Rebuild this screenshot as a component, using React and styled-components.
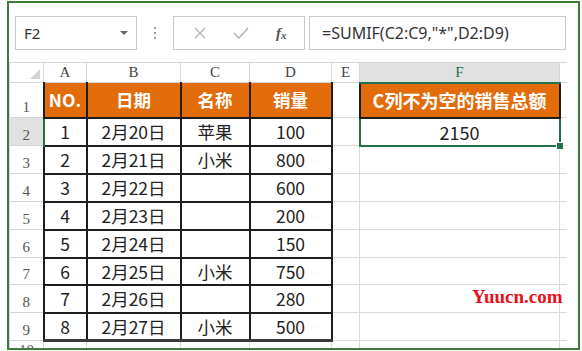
import React from 'react';
import styled, { createGlobalStyle } from 'styled-components';

const GlobalStyle = createGlobalStyle`
  html, body { margin: 0; padding: 0; background: #fff; }
  body { font-family: "Noto Sans", "Noto Sans CJK SC", sans-serif; }
`;

const Frame = styled.div`
  position: relative;
  box-sizing: border-box;
  width: 573px;
  height: 349px;
  margin: 1px 0 0 7px;
  border: 2px solid #3c7d3c;
  overflow: hidden;
  background: #fff;
`;

const FormulaBar = styled.div`
  display: flex;
  align-items: stretch;
  height: 34px;
  padding: 13px 0 0 6px;
`;

const NameBox = styled.div`
  box-sizing: border-box;
  width: 122px;
  display: flex;
  align-items: center;
  justify-content: space-between;
  padding: 0 8px 0 8px;
  border: 1px solid #c8c8c8;
  font-size: 15px;
  color: #333;
`;

const Caret = styled.span`
  width: 0;
  height: 0;
  border-left: 4px solid transparent;
  border-right: 4px solid transparent;
  border-top: 4px solid #666;
`;

const Dots = styled.div`
  width: 36px;
  display: flex;
  flex-direction: column;
  align-items: center;
  justify-content: center;
  gap: 3px;
  span {
    width: 2px;
    height: 2px;
    background: #999;
  }
`;

const FxBox = styled.div`
  box-sizing: border-box;
  width: 132px;
  display: flex;
  align-items: center;
  justify-content: space-around;
  padding: 0 4px 0 6px;
  border: 1px solid #c8c8c8;
`;

const Fx = styled.span`
  font-family: "Liberation Serif", serif;
  font-style: italic;
  font-weight: bold;
  font-size: 15px;
  color: #555;
  sub {
    font-size: 11px;
    vertical-align: -1px;
  }
`;

const FormulaInput = styled.div`
  box-sizing: border-box;
  width: 257px;
  margin-left: 4px;
  display: flex;
  align-items: center;
  padding-left: 12px;
  border: 1px solid #c8c8c8;
  font-size: 16px;
  color: #333;
`;

const Sheet = styled.table`
  margin-top: 12px;
  border-collapse: collapse;
  table-layout: fixed;
  width: 557px;
`;

const Row = styled.tr`
  height: ${p => p.$h}px;
`;

const ColHead = styled.th`
  padding: 0;
  font-family: "Liberation Serif", "DejaVu Serif", serif;
  font-weight: normal;
  font-size: 15px;
  color: ${p => (p.$sel ? '#217346' : '#444')};
  background: ${p => (p.$sel ? '#e1e1e1' : '#fff')};
  border: 1px solid #d6d6d6;
  border-bottom: ${p => (p.$sel ? '2px solid #217346' : '1px solid #d6d6d6')};
  ${p => p.$last && 'border-right: 0;'}
`;

const Corner = styled.th`
  position: relative;
  padding: 0;
  border: 1px solid #d6d6d6;
  &::after {
    content: '';
    position: absolute;
    right: 3px;
    bottom: 3px;
    width: 0;
    height: 0;
    border-left: 10px solid transparent;
    border-bottom: 10px solid #d3d3d3;
  }
`;

const RowHead = styled.th`
  padding: 0 0 1px;
  vertical-align: bottom;
  font-family: "Liberation Serif", "DejaVu Serif", serif;
  font-weight: normal;
  font-size: 15px;
  color: #555;
  background: ${p => (p.$sel ? '#e1e1e1' : '#fff')};
  border: 1px solid #d6d6d6;
  border-right: ${p => (p.$sel ? '2px solid #217346' : '1px solid #d6d6d6')};
`;

const Cell = styled.td`
  position: relative;
  padding: 0;
  text-align: center;
  vertical-align: middle;
  white-space: nowrap;
  overflow: visible;
  font-family: "Noto Sans CJK SC", sans-serif;
  font-size: 17.5px;
  color: #222;
  border: 1px solid #dadada;
  ${p => p.$grid === false && 'border-right: 0;'}
  ${p => p.$table && 'border: 2px solid #1e1e1e;'}
  ${p => p.$head && `
    background: #e26b0a;
    color: #fff;
    font-weight: bold;
    border-top: 1px solid #d6d6d6;
  `}
  ${p => p.$bottom && 'border-bottom: 3px solid #3a3a3a;'}
  ${p => p.$active && 'border: 2px solid #217346;'}
  ${p => p.$wide && 'font-size: 18px;'}
`;

const FillHandle = styled.span`
  position: absolute;
  right: -5px;
  bottom: -5px;
  width: 6px;
  height: 6px;
  background: #217346;
  border: 1px solid #fff;
`;

const Watermark = styled.span`
  position: absolute;
  left: 463px;
  top: 284px;
  font-family: "Liberation Serif", serif;
  font-weight: bold;
  font-size: 19px;
  line-height: 1;
  color: #e8101a;
`;

const rows = [
  [1, '2月20日', '苹果', 100],
  [2, '2月21日', '小米', 800],
  [3, '2月22日', '', 600],
  [4, '2月23日', '', 200],
  [5, '2月24日', '', 150],
  [6, '2月25日', '小米', 750],
  [7, '2月26日', '', 280],
  [8, '2月27日', '小米', 500],
];
const heights = [27, 28, 28, 28, 28, 27, 28, 27];
const cols = ['A', 'B', 'C', 'D', 'E', 'F'];

export default function App() {
  return (
    <>
      <GlobalStyle />
      <Frame>
        <FormulaBar>
          <NameBox>
            F2
            <Caret />
          </NameBox>
          <Dots>
            <span />
            <span />
            <span />
          </Dots>
          <FxBox>
            <svg width="12" height="12" viewBox="0 0 12 12">
              <path d="M1 1 L11 11 M11 1 L1 11" stroke="#b4b4b4" strokeWidth="1.4" fill="none" />
            </svg>
            <svg width="16" height="12" viewBox="0 0 16 12">
              <path d="M1 6 L6 11 L15 1" stroke="#b4b4b4" strokeWidth="1.6" fill="none" />
            </svg>
            <Fx>
              f<sub>x</sub>
            </Fx>
          </FxBox>
          <FormulaInput>=SUMIF(C2:C9,"*",D2:D9)</FormulaInput>
        </FormulaBar>

        <Sheet>
          <colgroup>
            <col style={{ width: 34 }} />
            <col style={{ width: 43 }} />
            <col style={{ width: 94 }} />
            <col style={{ width: 69 }} />
            <col style={{ width: 82 }} />
            <col style={{ width: 28 }} />
            <col style={{ width: 200 }} />
            <col style={{ width: 7 }} />
          </colgroup>
          <tbody>
            <Row $h={20}>
              <Corner />
              {cols.map(c => (
                <ColHead key={c} $sel={c === 'F'}>
                  {c}
                </ColHead>
              ))}
              <ColHead $last />
            </Row>
            <Row $h={35}>
              <RowHead>1</RowHead>
              <Cell $table $head>NO.</Cell>
              <Cell $table $head>日期</Cell>
              <Cell $table $head>名称</Cell>
              <Cell $table $head>销量</Cell>
              <Cell />
              <Cell $table $head $wide>C列不为空的销售总额</Cell>
              <Cell $grid={false} />
            </Row>
            {rows.map((r, i) => (
              <Row key={r[0]} $h={heights[i]}>
                <RowHead $sel={i === 0}>{i + 2}</RowHead>
                {r.map((v, j) => (
                  <Cell key={j} $table $bottom={i === rows.length - 1}>
                    {v}
                  </Cell>
                ))}
                <Cell />
                {i === 0 ? (
                  <Cell $active $wide>
                    2150
                    <FillHandle />
                  </Cell>
                ) : (
                  <Cell />
                )}
                <Cell $grid={false} />
              </Row>
            ))}
            <Row $h={20}>
              <RowHead>10</RowHead>
              <Cell />
              <Cell />
              <Cell />
              <Cell />
              <Cell />
              <Cell />
              <Cell $grid={false} />
            </Row>
          </tbody>
        </Sheet>

        <Watermark>Yuucn.com</Watermark>
      </Frame>
    </>
  );
}
